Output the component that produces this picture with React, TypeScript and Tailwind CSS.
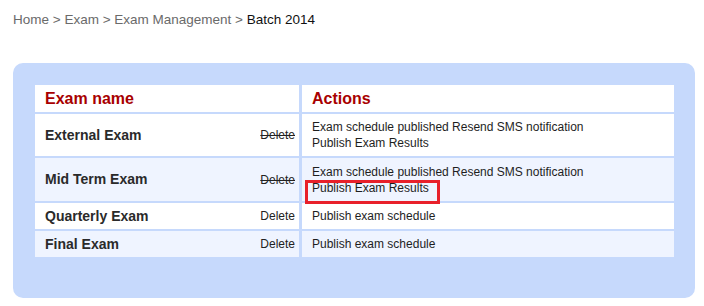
import React from "react";

const rows = [
  { name: "External Exam", del: true, lines: ["Exam schedule published Resend SMS notification", "Publish Exam Results"], h: "h-[42px]", bg: "bg-white", box: false },
  { name: "Mid Term Exam", del: true, lines: ["Exam schedule published Resend SMS notification", "Publish Exam Results"], h: "h-[43px]", bg: "bg-[#eff4ff]", box: true },
  { name: "Quarterly Exam", del: false, lines: ["Publish exam schedule"], h: "h-[26px]", bg: "bg-white", box: false },
  { name: "Final Exam", del: false, lines: ["Publish exam schedule"], h: "h-[26px]", bg: "bg-[#eff4ff]", box: false },
];

export default function App() {
  return (
    <div className="w-[704px] h-[306px] bg-white" style={{ fontFamily: '"Liberation Sans", Arial, sans-serif' }}>
      <div className="pt-[12px] pl-[13px] text-[13.5px] leading-[16px] text-[#6a6a6a]">
        Home &gt; Exam &gt; Exam Management &gt; <span className="text-[#111]">Batch 2014</span>
      </div>
      <div className="mt-[35px] ml-[13px] w-[682px] h-[235px] rounded-[10px] bg-[#c6d9fc] pt-[22px] pl-[22px]">
        <div className="grid grid-cols-[264px_372px] gap-x-[3px] gap-y-[2px]">
          <div className="h-[27px] bg-white pl-[10px] flex items-center text-[16px] font-bold text-[#a80000]">Exam name</div>
          <div className="h-[27px] bg-white pl-[10px] flex items-center text-[16px] font-bold text-[#a80000]">Actions</div>
          {rows.map((r) => (
            <React.Fragment key={r.name}>
              <div className={`${r.h} ${r.bg} pl-[10px] pr-[4px] flex items-center justify-between`}>
                <span className="text-[14px] font-bold text-[#2a2a2a]">{r.name}</span>
                <span className={`text-[12px] text-[#222] ${r.del ? "line-through" : ""}`}>Delete</span>
              </div>
              <div className={`${r.h} ${r.bg} pl-[10px] flex flex-col justify-center text-[12px] leading-[16px] text-[#1e1e1e]`}>
                {r.lines.map((l, i) => (
                  <div key={i}>
                    <span className="relative">
                      {l}
                      {r.box && i === 1 ? (
                        <span className="absolute left-[-7px] top-[-1px] w-[135px] h-[24px] border-[3px] border-[#e8202a]" />
                      ) : null}
                    </span>
                  </div>
                ))}
              </div>
            </React.Fragment>
          ))}
        </div>
      </div>
    </div>
  );
}
